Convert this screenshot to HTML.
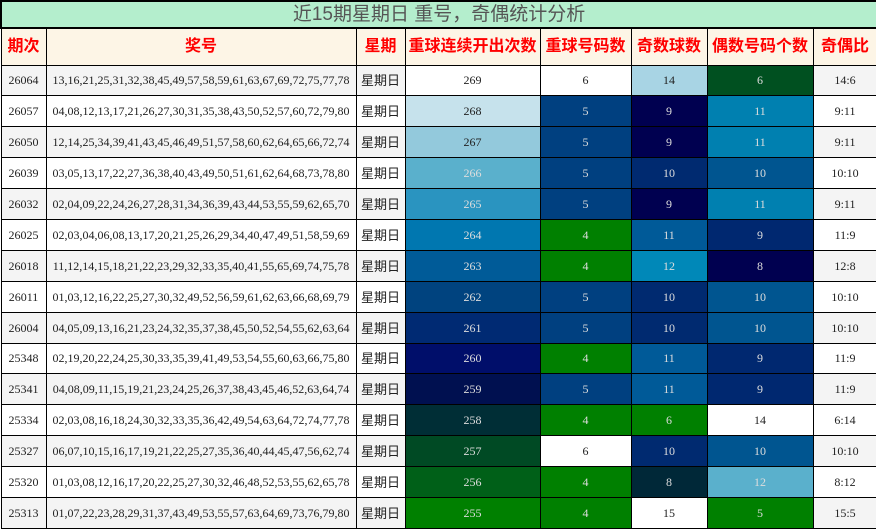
<!DOCTYPE html><html><head><meta charset="utf-8"><style>
body{margin:0;width:876px;height:531px;overflow:hidden;background:#fff}
table{border-collapse:collapse;table-layout:fixed;width:876px;font-family:"Liberation Serif","Noto Serif CJK SC",serif;font-size:12px;color:#222}
td,th{border:1px solid #000;text-align:center;padding:0;white-space:nowrap;overflow:hidden;line-height:14px}
.t td{background:#b4eecd;font-family:"Liberation Sans","Noto Sans CJK SC",sans-serif;font-size:19px;color:#555;border:2px solid #000;line-height:20px}
.t{height:27px}
th{background:#fdf5e6;color:#f00;font-family:"Liberation Sans","Noto Sans CJK SC",sans-serif;font-size:16px;font-weight:bold}
.h{height:37px}
tr.r{height:30.9px}
tr.g td{background:#f4f4f4}
.w{font-family:"Noto Sans CJK SC",sans-serif;font-size:13px}
td.d{color:#ddd}
</style></head><body><table>
<colgroup><col style="width:45px"><col style="width:310px"><col style="width:49px"><col style="width:135px"><col style="width:91px"><col style="width:76px"><col style="width:106px"><col style="width:64px"></colgroup>
<tr class="t"><td colspan="8">近15期星期日 重号，奇偶统计分析</td></tr>
<tr class="h"><th>期次</th><th>奖号</th><th>星期</th><th>重球连续开出次数</th><th>重球号码数</th><th>奇数球数</th><th>偶数号码个数</th><th>奇偶比</th></tr>
<tr class="r g"><td>26064</td><td>13,16,21,25,31,32,38,45,49,57,58,59,61,63,67,69,72,75,77,78</td><td class="w">星期日</td><td style="background:#fff">269</td><td style="background:#fff">6</td><td style="background:#a8d4e4">14</td><td class="d" style="background:#005020">6</td><td>14:6</td></tr>
<tr class="r"><td>26057</td><td>04,08,12,13,17,21,26,27,30,31,35,38,43,50,52,57,60,72,79,80</td><td class="w">星期日</td><td style="background:#c6e2ec">268</td><td class="d" style="background:#004080">5</td><td class="d" style="background:#000050">9</td><td class="d" style="background:#0080b0">11</td><td>9:11</td></tr>
<tr class="r g"><td>26050</td><td>12,14,25,34,39,41,43,45,46,49,51,57,58,60,62,64,65,66,72,74</td><td class="w">星期日</td><td style="background:#93c9dc">267</td><td class="d" style="background:#004080">5</td><td class="d" style="background:#000050">9</td><td class="d" style="background:#0080b0">11</td><td>9:11</td></tr>
<tr class="r"><td>26039</td><td>03,05,13,17,22,27,36,38,40,43,49,50,51,61,62,64,68,73,78,80</td><td class="w">星期日</td><td class="d" style="background:#5ab0cc">266</td><td class="d" style="background:#004080">5</td><td class="d" style="background:#002a70">10</td><td class="d" style="background:#005590">10</td><td>10:10</td></tr>
<tr class="r g"><td>26032</td><td>02,04,09,22,24,26,27,28,31,34,36,39,43,44,53,55,59,62,65,70</td><td class="w">星期日</td><td class="d" style="background:#2a94c0">265</td><td class="d" style="background:#004080">5</td><td class="d" style="background:#000050">9</td><td class="d" style="background:#0080b0">11</td><td>9:11</td></tr>
<tr class="r"><td>26025</td><td>02,03,04,06,08,13,17,20,21,25,26,29,34,40,47,49,51,58,59,69</td><td class="w">星期日</td><td class="d" style="background:#0077b0">264</td><td class="d" style="background:#008000">4</td><td class="d" style="background:#005a98">11</td><td class="d" style="background:#002870">9</td><td>11:9</td></tr>
<tr class="r g"><td>26018</td><td>11,12,14,15,18,21,22,23,29,32,33,35,40,41,55,65,69,74,75,78</td><td class="w">星期日</td><td class="d" style="background:#005b98">263</td><td class="d" style="background:#008000">4</td><td class="d" style="background:#0088b8">12</td><td class="d" style="background:#000050">8</td><td>12:8</td></tr>
<tr class="r"><td>26011</td><td>01,03,12,16,22,25,27,30,32,49,52,56,59,61,62,63,66,68,69,79</td><td class="w">星期日</td><td class="d" style="background:#00437f">262</td><td class="d" style="background:#004080">5</td><td class="d" style="background:#002a70">10</td><td class="d" style="background:#005590">10</td><td>10:10</td></tr>
<tr class="r g"><td>26004</td><td>04,05,09,13,16,21,23,24,32,35,37,38,45,50,52,54,55,62,63,64</td><td class="w">星期日</td><td class="d" style="background:#002a73">261</td><td class="d" style="background:#004080">5</td><td class="d" style="background:#002a70">10</td><td class="d" style="background:#005590">10</td><td>10:10</td></tr>
<tr class="r"><td>25348</td><td>02,19,20,22,24,25,30,33,35,39,41,49,53,54,55,60,63,66,75,80</td><td class="w">星期日</td><td class="d" style="background:#000e6a">260</td><td class="d" style="background:#008000">4</td><td class="d" style="background:#005a98">11</td><td class="d" style="background:#002870">9</td><td>11:9</td></tr>
<tr class="r g"><td>25341</td><td>04,08,09,11,15,19,21,23,24,25,26,37,38,43,45,46,52,63,64,74</td><td class="w">星期日</td><td class="d" style="background:#001050">259</td><td class="d" style="background:#004080">5</td><td class="d" style="background:#005a98">11</td><td class="d" style="background:#002870">9</td><td>11:9</td></tr>
<tr class="r"><td>25334</td><td>02,03,08,16,18,24,30,32,33,35,36,42,49,54,63,64,72,74,77,78</td><td class="w">星期日</td><td class="d" style="background:#002e36">258</td><td class="d" style="background:#008000">4</td><td class="d" style="background:#008000">6</td><td style="background:#fff">14</td><td>6:14</td></tr>
<tr class="r g"><td>25327</td><td>06,07,10,15,16,17,19,21,22,25,27,35,36,40,44,45,47,56,62,74</td><td class="w">星期日</td><td class="d" style="background:#004a24">257</td><td style="background:#fff">6</td><td class="d" style="background:#002a70">10</td><td class="d" style="background:#005590">10</td><td>10:10</td></tr>
<tr class="r"><td>25320</td><td>01,03,08,12,16,17,20,22,25,27,30,32,46,48,52,53,55,62,65,78</td><td class="w">星期日</td><td class="d" style="background:#006018">256</td><td class="d" style="background:#008000">4</td><td class="d" style="background:#002838">8</td><td class="d" style="background:#5ab0cc">12</td><td>8:12</td></tr>
<tr class="r g"><td>25313</td><td>01,07,22,23,28,29,31,37,43,49,53,55,57,63,64,69,73,76,79,80</td><td class="w">星期日</td><td class="d" style="background:#008000">255</td><td class="d" style="background:#008000">4</td><td style="background:#fff">15</td><td class="d" style="background:#008000">5</td><td>15:5</td></tr>
</table></body></html>
